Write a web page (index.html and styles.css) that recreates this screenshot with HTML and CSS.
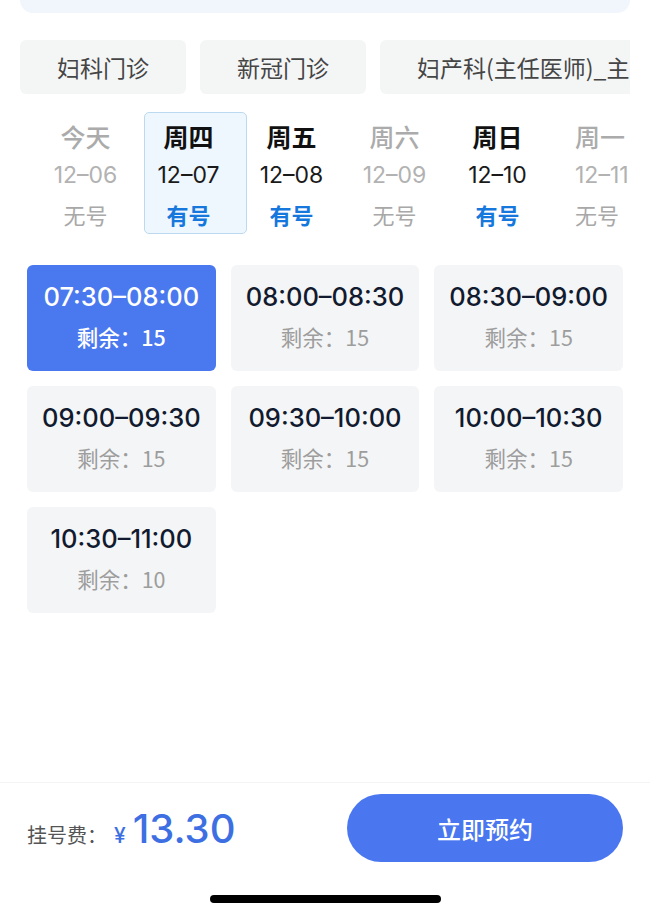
FILE: index.html
```html
<!DOCTYPE html>
<html lang="zh-CN">
<head>
<meta charset="utf-8">
<title>预约挂号</title>
<link rel="stylesheet" href="styles.css">
</head>
<body>
<div class="page">
  <div class="topbar"></div>
  <div class="tabs">
    <div class="tab">妇科门诊</div>
    <div class="tab">新冠门诊</div>
    <div class="tab">妇产科(主任医师)_主</div>
  </div>
  <div class="days">
    <div class="day off"><div class="wd">今天</div><div class="dt">12–06</div><div class="st">无号</div></div>
    <div class="day on active"><div class="wd">周四</div><div class="dt">12–07</div><div class="st">有号</div></div>
    <div class="day on"><div class="wd">周五</div><div class="dt">12–08</div><div class="st">有号</div></div>
    <div class="day off"><div class="wd">周六</div><div class="dt">12–09</div><div class="st">无号</div></div>
    <div class="day on"><div class="wd">周日</div><div class="dt">12–10</div><div class="st">有号</div></div>
    <div class="day off last"><div class="wd">周一</div><div class="dt">12–11</div><div class="st">无号</div></div>
  </div>
  <div class="slots">
    <div class="slot selected"><div class="time">07:30–08:00</div><div class="left">剩余：15</div></div>
    <div class="slot"><div class="time">08:00–08:30</div><div class="left">剩余：15</div></div>
    <div class="slot"><div class="time">08:30–09:00</div><div class="left">剩余：15</div></div>
    <div class="slot"><div class="time">09:00–09:30</div><div class="left">剩余：15</div></div>
    <div class="slot"><div class="time">09:30–10:00</div><div class="left">剩余：15</div></div>
    <div class="slot"><div class="time">10:00–10:30</div><div class="left">剩余：15</div></div>
    <div class="slot"><div class="time">10:30–11:00</div><div class="left">剩余：10</div></div>
  </div>
  <div class="footer">
    <div class="fee"><span class="fee-label">挂号费：</span><span class="yen">¥</span><span class="amount">13.30</span></div>
    <button class="book">立即预约</button>
  </div>
  <div class="home-indicator"></div>
</div>
</body>
</html>
```

FILE: styles.css
```css
html, body {
  margin: 0;
  padding: 0;
  background: #ffffff;
}
body {
  font-family: "Inter", "Noto Sans CJK SC", sans-serif;
  color: #111;
}
.page {
  width: 650px;
  height: 917px;
  display: flex;
  flex-direction: column;
  overflow: hidden;
}
.topbar {
  margin: 0 20px;
  height: 13px;
  background: #f1f6fd;
  border-radius: 0 0 14px 14px;
}
.tabs {
  margin: 27px 20px 0;
  height: 54px;
  display: flex;
  gap: 14px;
  overflow: hidden;
}
.tab {
  flex: none;
  padding: 0 37px;
  background: #f4f5f5;
  border-radius: 6px;
  font-family: "Noto Sans CJK SC", sans-serif;
  font-size: 23px;
  line-height: 54px;
  color: #454545;
  white-space: nowrap;
}
.tab:last-child {
  padding-right: 20px;
}
.days {
  margin: 18px 20px 0;
  padding-left: 14px;
  height: 122px;
  display: flex;
  overflow: hidden;
}
.day {
  flex: none;
  width: 103px;
  position: relative;
  isolation: isolate;
  display: flex;
  flex-direction: column;
  align-items: center;
  padding-top: 6px;
  box-sizing: border-box;
}
.day.last {
  width: 90px;
  align-items: flex-start;
  padding-left: 26px;
}
.day.active::before {
  content: "";
  position: absolute;
  top: 0;
  bottom: 0;
  left: 7px;
  right: -7px;
  background: #eef7fe;
  border: 1px solid #bcd9ef;
  border-radius: 5px;
  z-index: -1;
}
.wd {
  font-family: "Noto Sans CJK SC", sans-serif;
  font-size: 25px;
  font-weight: 700;
  line-height: 37px;
}
.dt {
  font-size: 23px;
  line-height: 40px;
}
.st {
  font-family: "Noto Sans CJK SC", sans-serif;
  font-size: 22px;
  line-height: 39px;
}
.day.on .wd { color: #111; }
.day.on .dt { color: #1a1a1a; }
.day.on .st { color: #1677dc; font-weight: 700; }
.day.off .wd { color: #ababab; font-weight: 500; }
.day.off .dt { color: #b2b2b2; }
.day.off .st { color: #a8a8a8; }

.slots {
  margin: 31px 27px 0;
  display: grid;
  grid-template-columns: repeat(3, 1fr);
  column-gap: 15px;
  row-gap: 15px;
}
.slot {
  height: 106px;
  background: #f4f5f6;
  border-radius: 6px;
  display: flex;
  flex-direction: column;
  align-items: center;
  padding-top: 14px;
  box-sizing: border-box;
}
.time {
  font-size: 25.5px;
  line-height: 36px;
  color: #111a2e;
  font-weight: 500;
}
.left {
  font-family: "Noto Sans CJK SC", sans-serif;
  font-size: 21.5px;
  line-height: 44px;
  color: #9d9d9d;
}
.slot.selected {
  background: #4a78ef;
}
.slot.selected .time,
.slot.selected .left {
  color: #ffffff;
}
.slot.selected .left {
  font-weight: 500;
}

.footer {
  margin-top: auto;
  border-top: 1px solid #f4f4f4;
  padding: 11px 27px 0;
  display: flex;
  align-items: center;
  justify-content: space-between;
}
.fee {
  display: flex;
  align-items: baseline;
}
.fee-label {
  font-family: "Noto Sans CJK SC", sans-serif;
  font-size: 20px;
  color: #555;
}
.yen {
  font-size: 21px;
  color: #3d6fe3;
  font-weight: 500;
  margin-left: 7px;
  margin-right: 7px;
}
.amount {
  font-size: 40px;
  color: #3d6fe3;
  font-weight: 500;
}
.book {
  width: 276px;
  height: 68px;
  border: none;
  border-radius: 34px;
  background: #4a77f0;
  color: #fff;
  font-family: "Noto Sans CJK SC", sans-serif;
  font-size: 24px;
  font-weight: 500;
  padding: 0;
}
.home-indicator {
  width: 231px;
  height: 8px;
  border-radius: 4px;
  background: #000;
  margin: 33px auto 14px;
}
```
